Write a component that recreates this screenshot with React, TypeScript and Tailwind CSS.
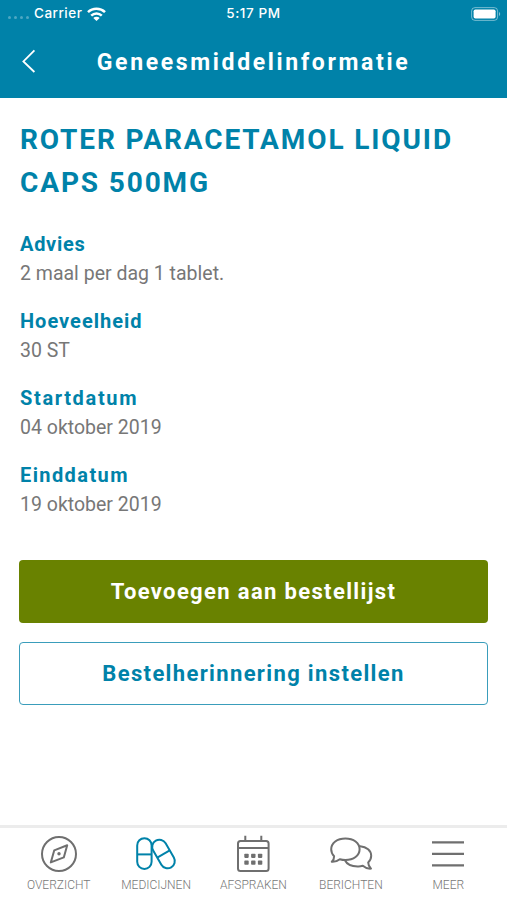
import type { ReactNode } from "react";

interface Detail {
  label: string;
  value: string;
  labelClass: string;
}

interface Tab {
  label: string;
  icon: ReactNode;
}

const details: Detail[] = [
  { label: "Advies", value: "2 maal per dag 1 tablet.", labelClass: "tracking-[0.7px]" },
  { label: "Hoeveelheid", value: "30 ST", labelClass: "tracking-[1px]" },
  { label: "Startdatum", value: "04 oktober 2019", labelClass: "tracking-[1.65px]" },
  { label: "Einddatum", value: "19 oktober 2019", labelClass: "tracking-[1.4px]" },
];

function CompassIcon() {
  return (
    <svg width="38" height="38" viewBox="0 0 38 38" fill="none" stroke="#6f6f6f" strokeWidth="2" strokeLinejoin="round">
      <circle cx="19" cy="19" r="17" />
      <path d="M27.2 10.3 L23.8 22.4 L10.8 27.4 L14.2 15.4 Z" />
      <circle cx="19" cy="18.8" r="1.7" fill="#6f6f6f" stroke="none" />
    </svg>
  );
}

function PillsIcon() {
  return (
    <svg width="42" height="38" viewBox="0 0 42 38" fill="none" stroke="#0082a9" strokeWidth="2">
      <rect x="2.2" y="3.2" width="14.4" height="30.8" rx="7.2" />
      <path d="M2.2 19.4 H16.6" />
      <g transform="rotate(-30 28.5 19)">
        <rect x="21.3" y="3.6" width="14.4" height="30.8" rx="7.2" />
        <path d="M21.3 19 H35.7" />
      </g>
    </svg>
  );
}

function CalendarIcon() {
  return (
    <svg width="38" height="38" viewBox="0 0 38 38" fill="none" stroke="#6f6f6f" strokeWidth="2">
      <rect x="4" y="5.9" width="30.6" height="30.2" rx="2.5" />
      <path d="M4 13 H34.6 M11.3 0.8 V6 M27.3 0.8 V6" />
      <g fill="#6f6f6f" stroke="none">
        <rect x="10.3" y="18.7" width="4.4" height="4.2" rx="0.8" />
        <rect x="17.1" y="18.7" width="4.4" height="4.2" rx="0.8" />
        <rect x="23.9" y="18.7" width="4.4" height="4.2" rx="0.8" />
        <rect x="10.3" y="25.6" width="4.4" height="4.2" rx="0.8" />
        <rect x="17.1" y="25.6" width="4.4" height="4.2" rx="0.8" />
        <rect x="23.9" y="25.6" width="4.4" height="4.2" rx="0.8" />
      </g>
    </svg>
  );
}

function ChatIcon() {
  return (
    <svg width="44" height="38" viewBox="0 0 44 38" fill="none" stroke="#6f6f6f" strokeWidth="2" strokeLinejoin="round" strokeLinecap="round">
      <path d="M16.4 3.4 C24.6 3.4 30.6 8 30.6 14.3 C30.6 20.6 24.6 25 16.4 25 C14.4 25 12.5 24.7 10.8 24.2 C8.6 26 5.6 27 2.8 26.8 C4.4 25.2 5.2 23.6 5.1 21.2 C3.2 19.3 2.2 17 2.2 14.3 C2.2 8 8.2 3.4 16.4 3.4 Z" />
      <path d="M31.2 11.2 C37.6 11.8 42.2 15.8 42.2 20.8 C42.2 23.4 41.2 25.6 39.2 27.4 C39.2 30 40.2 31.8 42 33.6 C39 33.8 36 32.8 33.8 30.8 C32 31.3 30.2 31.5 28.6 31.4 C22.8 31.3 17.8 29 15.9 25.2" />
    </svg>
  );
}

function MenuIcon() {
  return (
    <svg width="38" height="38" viewBox="0 0 38 38" fill="none" stroke="#6f6f6f" strokeWidth="2.3">
      <path d="M3 7.3 H35 M3 18.8 H35 M3 30.3 H35" />
    </svg>
  );
}

const tabs: Tab[] = [
  { label: "OVERZICHT", icon: <CompassIcon /> },
  { label: "MEDICIJNEN", icon: <PillsIcon /> },
  { label: "AFSPRAKEN", icon: <CalendarIcon /> },
  { label: "BERICHTEN", icon: <ChatIcon /> },
  { label: "MEER", icon: <MenuIcon /> },
];

function StatusBar() {
  return (
    <div className="grid h-[27px] grid-cols-3 items-center font-[Inter,sans-serif] text-[13.5px] font-medium text-white">
      <div className="flex items-center pl-2">
        <div className="flex gap-[3px] pt-2">
          <span className="size-[3px] rounded-full bg-white/30" />
          <span className="size-[3px] rounded-full bg-white/30" />
          <span className="size-[3px] rounded-full bg-white/30" />
          <span className="size-[3px] rounded-full bg-white/30" />
        </div>
        <span className="ml-[5px] tracking-[0.5px]">Carrier</span>
        <svg className="ml-[5px]" width="19" height="14" viewBox="0 0 19 14" fill="none" stroke="white" strokeWidth="2.5">
          <path d="M1 5.2 C5.6 0.7 13.4 0.7 18 5.2" />
          <path d="M4.2 8.6 C7.2 5.7 11.8 5.7 14.8 8.6" />
          <path d="M9.5 14 L6.3 11 C8 9.4 11 9.4 12.7 11 Z" fill="white" stroke="none" />
        </svg>
      </div>
      <div className="text-center tracking-[0.6px]">5:17 PM</div>
      <div className="flex justify-end pr-1.5">
        <svg width="30" height="14" viewBox="0 0 30 14">
          <rect x="0.6" y="0.6" width="26" height="12.8" rx="3.4" fill="none" stroke="white" strokeOpacity="0.45" />
          <rect x="2.6" y="2.4" width="22" height="9.2" rx="1.8" fill="white" />
          <path d="M28 5 C29.6 5.6 29.6 8.4 28 9 Z" fill="white" fillOpacity="0.5" />
        </svg>
      </div>
    </div>
  );
}

export default function App() {
  return (
    <div className="flex h-[900px] w-[507px] flex-col overflow-hidden bg-white font-[Roboto,sans-serif]">
      <header className="h-[98px] shrink-0 bg-[#0082a9]">
        <StatusBar />
        <div className="grid h-[71px] grid-cols-[48px_1fr_48px] items-center">
          <button aria-label="Terug" className="flex justify-end pr-3 pb-1">
            <svg width="15" height="24" viewBox="0 0 15 24" fill="none" stroke="white" strokeWidth="1.8">
              <path d="M13.4 1.4 L2.4 12.4 L13.4 23" />
            </svg>
          </button>
          <h1 className="pt-[2px] text-center text-[23px] font-bold tracking-[2.65px] whitespace-nowrap text-white">
            Geneesmiddelinformatie
          </h1>
        </div>
      </header>

      <main className="flex-1 px-[19px] pt-5 text-[#0082a9]">
        <h2 className="pl-px text-[28px] leading-[43px] font-bold tracking-[1.88px] whitespace-nowrap">
          ROTER PARACETAMOL LIQUID
          <br />
          CAPS 500MG
        </h2>

        <dl className="mt-[25px] flex flex-col gap-[18px] pl-px">
          {details.map((detail) => (
            <div key={detail.label}>
              <dt className="text-[20px] leading-[30px] font-bold">
                <span className={detail.labelClass}>{detail.label}</span>
              </dt>
              <dd className="text-[19.5px] leading-[29px] text-[#777777]">{detail.value}</dd>
            </div>
          ))}
        </dl>

        <div className="mt-[41px] flex flex-col gap-[19px]">
          <button className="h-[63px] rounded-[4px] bg-[#698200] text-[22px] font-bold tracking-[1.35px] text-white">
            Toevoegen aan bestellijst
          </button>
          <button className="h-[63px] rounded-[4px] border-[1.5px] border-[#3a9dbb] text-[22px] font-bold tracking-[1.35px]">
            Bestelherinnering instellen
          </button>
        </div>
      </main>

      <nav className="flex h-[75px] shrink-0 justify-center border-t-[3px] border-[#ececec] pt-[7px]">
        {tabs.map((tab) => (
          <button key={tab.label} className="flex w-[97.4px] flex-col items-center">
            {tab.icon}
            <span className="mt-1 text-[12px] leading-4 font-light text-[#777777]">{tab.label}</span>
          </button>
        ))}
      </nav>
    </div>
  );
}
